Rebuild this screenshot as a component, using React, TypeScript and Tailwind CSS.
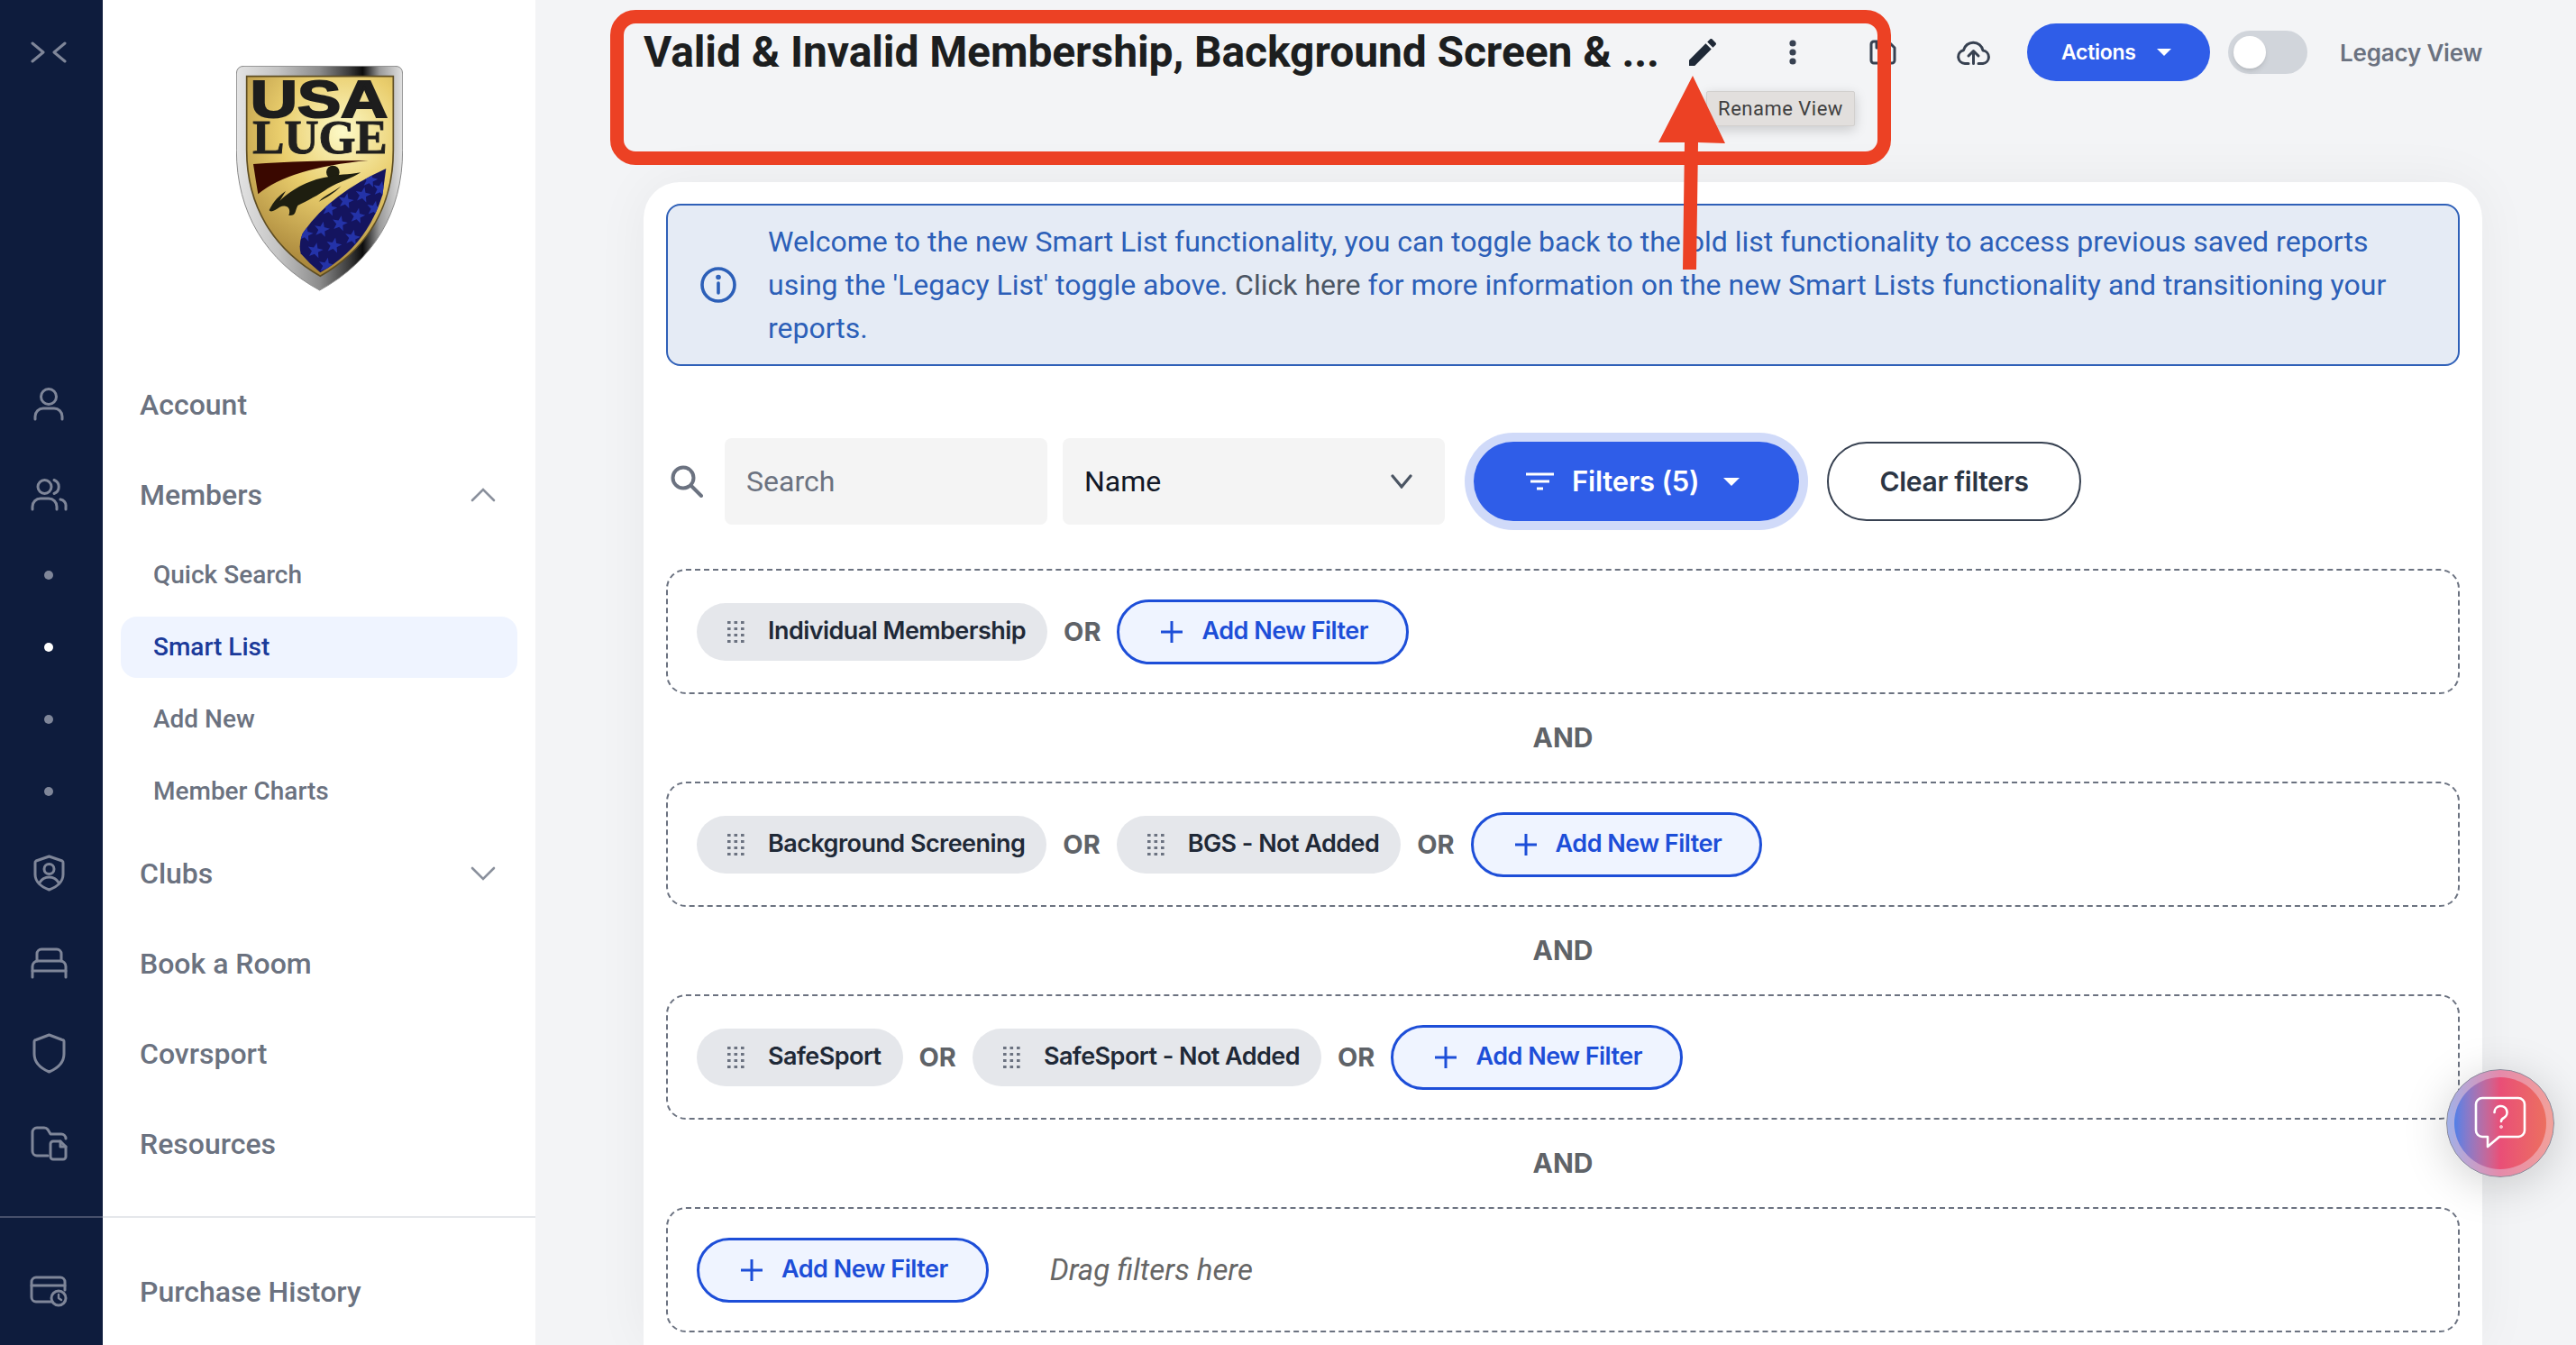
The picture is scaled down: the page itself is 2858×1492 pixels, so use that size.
import React from 'react';

const STARS = [
  [490, 520], [547, 500], [435, 545], [410, 615], [470, 595], [528, 570], [585, 545],
  [388, 685], [450, 668], [512, 642], [355, 630], [425, 735], [570, 450], [606, 480],
];

function starPoints(cx: number, cy: number, r: number) {
  const pts: string[] = [];
  for (let i = 0; i < 10; i++) {
    const rad = i % 2 === 0 ? r : r * 0.42;
    const a = -Math.PI / 2 + (i * Math.PI) / 5 + 0.2;
    pts.push(`${cx + rad * Math.cos(a)},${cy + rad * Math.sin(a)}`);
  }
  return pts.join(' ');
}

function Logo() {
  return (
    <svg viewBox="125 70 555 750" className="w-[185px] h-[250px]">
      <defs>
        <linearGradient id="bezel" x1="0" y1="0" x2="1" y2="0">
          <stop offset="0" stopColor="#e4e4e4" />
          <stop offset="0.25" stopColor="#c4c4c4" />
          <stop offset="0.5" stopColor="#8c8c8c" />
          <stop offset="0.68" stopColor="#3a3a3a" />
          <stop offset="0.76" stopColor="#0c0c0c" />
          <stop offset="0.86" stopColor="#9a9a9a" />
          <stop offset="1" stopColor="#e2e2e2" />
        </linearGradient>
        <radialGradient id="gold" gradientUnits="userSpaceOnUse" cx="480" cy="290" r="470">
          <stop offset="0" stopColor="#fdfac8" />
          <stop offset="0.45" stopColor="#e9cd6c" />
          <stop offset="1" stopColor="#a8853a" />
        </radialGradient>
        <clipPath id="flag">
          <path d="M624 412 Q430 500 345 630 Q332 665 340 695 Q370 730 405 758 Q560 670 612 500 Z" />
        </clipPath>
      </defs>
      <path
        d="M152 71 H653 Q679 71 679 97 V350 C679 560 580 720 403 817 C225 720 126 560 126 350 V97 Q126 71 152 71 Z"
        fill="url(#bezel)"
        stroke="#8a8a8a"
        strokeWidth="3"
      />
      <path
        d="M160 105 H648 V350 C648 540 560 680 405 770 C250 680 160 540 160 350 Z"
        fill="url(#gold)"
        stroke="#5e4d22"
        strokeWidth="5"
      />
      <text
        x="172"
        y="240"
        textLength="458"
        lengthAdjust="spacingAndGlyphs"
        fontFamily="Liberation Sans, sans-serif"
        fontWeight="700"
        fontSize="170"
        fill="#1d1d1d"
        stroke="#1d1d1d"
        strokeWidth="6"
      >
        USA
      </text>
      <text
        x="180"
        y="360"
        textLength="448"
        lengthAdjust="spacingAndGlyphs"
        fontFamily="Liberation Serif, serif"
        fontWeight="700"
        fontSize="160"
        fill="#1f1f1f"
        stroke="#1f1f1f"
        strokeWidth="3"
      >
        LUGE
      </text>
      <path d="M182 397 Q350 385 565 385 Q300 410 198 497 Q190 450 182 397 Z" fill="#3a0800" />
      <path d="M624 412 Q430 500 345 630 Q332 665 340 695 Q370 730 405 758 Q560 670 612 500 Z" fill="#14145f" />
      <g clipPath="url(#flag)" fill="#2433a8">
        {STARS.map(([x, y]) => (
          <polygon key={`${x}-${y}`} points={starPoints(x, y, 27)} />
        ))}
      </g>
      <circle cx="447" cy="424" r="22" fill="#1e1e10" />
      <path
        d="M235 550 C250 520 270 500 290 487 L270 520 C300 490 360 450 430 440 C460 432 500 432 540 425 C510 445 470 455 430 478 C400 500 360 520 330 535 C320 555 325 570 300 568 C310 540 290 530 270 540 C255 550 240 560 235 550 Z"
        fill="#1e1e10"
      />
      <path d="M400 522 C420 500 450 490 475 470 C450 495 425 510 400 522 Z" fill="#1e1e10" />
    </svg>
  );
}

const railStroke = {
  fill: 'none',
  stroke: '#7f8699',
  strokeWidth: 3,
  strokeLinecap: 'round' as const,
  strokeLinejoin: 'round' as const,
};

function Collapse() {
  return (
    <svg width="40" height="24" viewBox="0 0 40 24" {...railStroke}>
      <path d="M2 2 L14 12 L2 22" />
      <path d="M38 2 L26 12 L38 22" />
    </svg>
  );
}

function UserIcon() {
  return (
    <svg width="34" height="37" viewBox="0 0 34 37" {...railStroke}>
      <circle cx="17" cy="10" r="8.5" />
      <path d="M2 35 v-3 a9 9 0 0 1 9-9 h12 a9 9 0 0 1 9 9 v3" />
    </svg>
  );
}

function UsersIcon() {
  return (
    <svg width="41" height="37" viewBox="0 0 41 37" {...railStroke}>
      <circle cx="15.5" cy="10" r="7.5" />
      <path d="M26 2.5 a8 8 0 0 1 0 15" />
      <path d="M2 35 v-3 a9 9 0 0 1 9-9 h9 a9 9 0 0 1 9 9 v3" />
      <path d="M33 24 a7 7 0 0 1 6 8 v3" />
    </svg>
  );
}

function ShieldUserIcon() {
  return (
    <svg width="35" height="41" viewBox="0 0 35 41" {...railStroke}>
      <path d="M17.5 2 L32 7 a2 2 0 0 1 1 2 V22 C33 30 26 36 17.5 39 C9 36 2 30 2 22 V9 a2 2 0 0 1 1-2 Z" />
      <circle cx="17.5" cy="16" r="5.5" />
      <path d="M7 31 C10 26 14 25 17.5 25 C21 25 25 26 28 31" />
    </svg>
  );
}

function BedIcon() {
  return (
    <svg width="41" height="35" viewBox="0 0 41 35" {...railStroke}>
      <path d="M7 15 V7 a5 5 0 0 1 5-5 h17 a5 5 0 0 1 5 5 v8" />
      <path d="M2 33 V21 a6 6 0 0 1 6-6 h25 a6 6 0 0 1 6 6 v12" />
      <path d="M2 26 H39" />
    </svg>
  );
}

function ShieldIcon() {
  return (
    <svg width="37" height="45" viewBox="0 0 37 45" {...railStroke}>
      <path d="M18.5 2 L33 7.5 a2 2 0 0 1 2 2 V23 C35 32 28 39 18.5 43 C9 39 2 32 2 23 V9.5 a2 2 0 0 1 2-2 Z" />
    </svg>
  );
}

function FolderFileIcon() {
  return (
    <svg width="41" height="39" viewBox="0 0 41 39" {...railStroke}>
      <path d="M19 33 H7 a5 5 0 0 1-5-5 V7 a5 5 0 0 1 5-5 h8 a5 5 0 0 1 4 2 l3 5 h12 a5 5 0 0 1 5 5" />
      <path d="M22 20 a3 3 0 0 1 3-3 h8 l6 6 v11 a3 3 0 0 1-3 3 H25 a3 3 0 0 1-3-3 Z" />
      <path d="M33 17 v6 h6" />
    </svg>
  );
}

function CardClockIcon() {
  return (
    <svg width="42" height="35" viewBox="0 0 42 35" {...railStroke}>
      <path d="M24 29 H7 a5 5 0 0 1-5-5 V7 a5 5 0 0 1 5-5 h27 a5 5 0 0 1 5 5 v9" />
      <path d="M2 11 H39" />
      <circle cx="32" cy="25" r="8" />
      <path d="M32 21 v4 l3 2" strokeWidth="2.4" />
    </svg>
  );
}

function Chevron({ up, size = 28 }: { up?: boolean; size?: number }) {
  return (
    <svg width={size} height="16" viewBox="0 0 28 16" fill="none" stroke="#8a909c" strokeWidth="2.6" strokeLinecap="round">
      <path d={up ? 'M2 14 L14 2 L26 14' : 'M2 2 L14 14 L26 2'} />
    </svg>
  );
}

function Rail() {
  const Dot = ({ on }: { on?: boolean }) => (
    <div className="h-[80px] pr-[6px] flex items-center justify-center">
      <div className={on ? 'w-[10px] h-[10px] rounded-full bg-white' : 'w-[10px] h-[10px] rounded-full bg-[#7f8699]'} />
    </div>
  );
  const Row = ({ children }: { children: React.ReactNode }) => (
    <div className="h-[100px] pr-[6px] flex items-center justify-center">{children}</div>
  );
  return (
    <div className="w-[114px] shrink-0 h-full bg-[#0e1c3d] flex flex-col">
      <div className="h-[398px] shrink-0 flex justify-center pt-[46px] pr-[6px]">
        <div className="h-[24px]">
          <Collapse />
        </div>
      </div>
      <Row>
        <UserIcon />
      </Row>
      <Row>
        <UsersIcon />
      </Row>
      <Dot />
      <Dot on />
      <Dot />
      <Dot />
      <Row>
        <ShieldUserIcon />
      </Row>
      <Row>
        <BedIcon />
      </Row>
      <Row>
        <ShieldIcon />
      </Row>
      <Row>
        <FolderFileIcon />
      </Row>
      <div className="mt-[31px] h-[2px] bg-[#474f6b]" />
      <div className="mt-[31px]">
        <Row>
          <CardClockIcon />
        </Row>
      </div>
    </div>
  );
}

function NavTop({ label, chevron }: { label: string; chevron?: 'up' | 'down' }) {
  return (
    <div className="h-[100px] pt-[2px] pl-[41px] pr-[44px] flex items-center justify-between text-[32px] font-medium text-[#6b7280]">
      <span>{label}</span>
      {chevron && <Chevron up={chevron === 'up'} />}
    </div>
  );
}

function NavSub({ label, active }: { label: string; active?: boolean }) {
  return (
    <div className="h-[80px] flex items-center pl-[20px] pr-[20px]">
      <div
        className={
          active
            ? 'w-full h-[68px] rounded-[18px] bg-[#eff4ff] pl-[36px] flex items-center text-[28px] font-medium text-[#1b3a9a]'
            : 'w-full h-[68px] pl-[36px] flex items-center text-[28px] font-medium text-[#6b7280]'
        }
      >
        {label}
      </div>
    </div>
  );
}

function Sidebar() {
  return (
    <div className="w-[480px] shrink-0 h-full bg-white flex flex-col">
      <div className="h-[398px] shrink-0 flex justify-center pt-[73px]">
        <div className="h-[250px]">
          <Logo />
        </div>
      </div>
      <NavTop label="Account" />
      <NavTop label="Members" chevron="up" />
      <NavSub label="Quick Search" />
      <NavSub label="Smart List" active />
      <NavSub label="Add New" />
      <NavSub label="Member Charts" />
      <NavTop label="Clubs" chevron="down" />
      <NavTop label="Book a Room" />
      <NavTop label="Covrsport" />
      <NavTop label="Resources" />
      <div className="mt-[31px] h-[2px] bg-[#e5e7eb]" />
      <div className="mt-[31px]">
        <NavTop label="Purchase History" />
      </div>
    </div>
  );
}

function Grip() {
  return (
    <svg width="19" height="24" viewBox="0 0 19 24" fill="#6b7280" className="shrink-0">
      {[0, 7.5, 15].map((x) =>
        [0, 7, 14, 21].map((y) => <rect key={`${x}-${y}`} x={x} y={y} width="3.6" height="3" />),
      )}
    </svg>
  );
}

function Pill({ label }: { label: string }) {
  return (
    <div className="h-[64px] pl-[34px] pr-[24px] rounded-full bg-[#e5e7eb] flex items-center gap-[26px] shrink-0">
      <Grip />
      <span className="text-[27px] tracking-[-0.55px] font-semibold text-[#1f2937] whitespace-nowrap">{label}</span>
    </div>
  );
}

function Or() {
  return <span className="text-[29px] font-bold text-[#5f6368]">OR</span>;
}

function AddFilter() {
  return (
    <div className="h-[72px] pl-[46px] pr-[42px] rounded-full border-[3px] border-[#1d4ed8] bg-[#eff4ff] flex items-center gap-[21px] shrink-0">
      <svg width="24" height="24" viewBox="0 0 24 24" stroke="#1d4ed8" strokeWidth="3" className="shrink-0">
        <path d="M12 0 V24 M0 12 H24" />
      </svg>
      <span className="text-[27px] tracking-[-0.5px] font-semibold text-[#1d4ed8] whitespace-nowrap">Add New Filter</span>
    </div>
  );
}

function Group({ children }: { children: React.ReactNode }) {
  return (
    <div className="h-[139px] px-[32px] rounded-[22px] border-2 border-dashed border-[#6b7280] flex items-center gap-[18px]">
      {children}
    </div>
  );
}

function And() {
  return (
    <div className="h-[97px] flex items-center justify-center text-[30px] font-bold text-[#5f6368]">AND</div>
  );
}

function Header() {
  return (
    <div className="h-[202px] pt-[26px] shrink-0">
      <div className="h-[64px] flex items-center">
        <div className="w-[1155px] shrink-0 text-[48px] tracking-[-0.1px] font-bold text-[#1c1e1f] font-['Roboto',sans-serif] whitespace-nowrap">
          Valid &amp; Invalid Membership, Background Screen &amp; ...
        </div>
        <svg width="40" height="40" viewBox="0 0 24 24" fill="#1f2937" className="shrink-0">
          <path d="M3 17.25V21h3.75L17.81 9.94l-3.75-3.75L3 17.25zM20.71 7.04c.39-.39.39-1.02 0-1.41l-2.34-2.34c-.39-.39-1.02-.39-1.41 0l-1.83 1.83 3.75 3.75 1.83-1.83z" />
        </svg>
        <svg width="8" height="28" viewBox="0 0 8 28" fill="#374151" className="ml-[76px] shrink-0">
          <circle cx="4" cy="4" r="3.6" />
          <circle cx="4" cy="14" r="3.6" />
          <circle cx="4" cy="24" r="3.6" />
        </svg>
        <svg width="30" height="28" viewBox="0 0 30 28" fill="none" stroke="#374151" strokeWidth="3" strokeLinejoin="round" className="ml-[81px] shrink-0">
          <path d="M2 5 a3 3 0 0 1 3-3 h16 l7 7 v14 a3 3 0 0 1-3 3 H5 a3 3 0 0 1-3-3 Z" />
          <path d="M8 2 v7 h9 V2" />
        </svg>
        <svg width="37" height="27" viewBox="0 0 37 27" fill="none" stroke="#374151" strokeWidth="3" strokeLinecap="round" strokeLinejoin="round" className="ml-[67px] shrink-0">
          <path d="M13 25.500 H9 a7.500 7.500 0 0 1-1.500-14.800 A11 11 0 0 1 29 11 a7.300 7.300 0 0 1 0 14.500 H24" />
          <path d="M18.500 25.500 V12 M13 17 l5.500-5.500 5.500 5.500" />
        </svg>
        <div className="ml-[41px] w-[203px] h-[64px] rounded-full bg-[#2f5de8] flex items-center pl-[38px] gap-[23px] shrink-0">
          <span className="text-[23px] tracking-[-0.3px] font-semibold text-white">Actions</span>
          <div className="w-0 h-0 border-x-[8px] border-x-transparent border-t-[8px] border-t-white" />
        </div>
        <div className="ml-[20px] w-[88px] h-[48px] rounded-full bg-[#d1d5db] flex items-center pl-[6px] shrink-0">
          <div className="w-[36px] h-[36px] rounded-full bg-white shadow-md" />
        </div>
        <span className="ml-[36px] text-[26px] tracking-[-0.2px] font-semibold text-[#6b7280] whitespace-nowrap">Legacy View</span>
      </div>
    </div>
  );
}

function Alert() {
  return (
    <div className="h-[180px] rounded-[16px] border-2 border-[#2f60b8] bg-[#e5ebf5] flex items-center pl-[36px] pr-[40px] gap-[35px] font-['Roboto',sans-serif]">
      <svg width="40" height="40" viewBox="0 0 40 40" fill="none" stroke="#2c5fb8" strokeWidth="3.6" strokeLinecap="round" className="shrink-0">
        <circle cx="20" cy="20" r="18" />
        <path d="M20 18 V29" />
        <circle cx="20" cy="11.500" r="1" fill="#2c5fb8" />
      </svg>
      <p className="text-[32px] leading-[48px] text-[#2c5fb8]">
        Welcome to the new Smart List functionality, you can toggle back to the old list functionality to access previous saved reports using the 'Legacy List' toggle above. <span className="text-[#4b5563]">Click here</span> for more information on the new Smart Lists functionality and transitioning your reports.
      </p>
    </div>
  );
}

function Toolbar() {
  return (
    <div className="mt-[80px] mb-[49px] h-[96px] flex items-center pl-[4px]">
      <svg width="38" height="36" viewBox="0 0 38 36" fill="none" stroke="#6b7280" strokeWidth="4" strokeLinecap="round" className="shrink-0">
        <circle cx="15" cy="14" r="11.500" />
        <path d="M24 23 L35 34" />
      </svg>
      <div className="ml-[23px] w-[358px] h-[96px] rounded-[8px] bg-[#f4f4f4] flex items-center pl-[24px] text-[32px] text-[#6b7280] font-['Roboto',sans-serif] shrink-0">
        Search
      </div>
      <div className="ml-[17px] w-[424px] h-[96px] rounded-[8px] bg-[#f4f4f4] flex items-center justify-between pl-[24px] pr-[36px] text-[32px] text-[#111827] font-['Roboto',sans-serif] shrink-0">
        <span>Name</span>
        <svg width="24" height="16" viewBox="0 0 24 16" fill="none" stroke="#4b5563" strokeWidth="3.200" strokeLinecap="round">
          <path d="M2 2 L12 14 L22 2" />
        </svg>
      </div>
      <div className="ml-[32px] w-[361px] h-[88px] rounded-full bg-[#2f5de8] ring-[10px] ring-[#d0daf9] flex items-center pl-[58px] shrink-0">
        <svg width="31" height="20" viewBox="0 0 31 20" stroke="#fff" strokeWidth="3" className="shrink-0">
          <path d="M0 2 H31 M5 10 H26 M12 18 H19" />
        </svg>
        <span className="ml-[20px] text-[31px] tracking-[-0.2px] font-semibold text-white whitespace-nowrap">Filters (5)</span>
        <div className="ml-[27px] w-0 h-0 border-x-[9px] border-x-transparent border-t-[9px] border-t-white" />
      </div>
      <div className="ml-[31px] w-[282px] h-[88px] rounded-full border-2 border-[#374151] bg-white flex items-center justify-center text-[30px] tracking-[-0.3px] font-semibold text-[#2b3544] shrink-0">
        Clear filters
      </div>
    </div>
  );
}

function Overlays() {
  return (
    <>
      <div className="absolute left-[1893px] top-[101px] w-[165px] h-[39px] rounded-[2px] bg-[#e2dfdd] border border-[#d2d0ce] shadow-[0_4px_14px_rgba(0,0,0,0.18)] flex items-center justify-center text-[22px] tracking-[0.5px] text-[#404040] font-['Roboto',sans-serif]">
        Rename View
      </div>
      <div className="absolute left-[677px] top-[11px] w-[1421px] h-[172px] rounded-[28px] border-[15px] border-[#ec4124]" />
      <svg className="absolute left-[1830px] top-[80px]" width="100" height="225" viewBox="1830 80 100 225" fill="#ec4124">
        <polygon points="1878,84 1914,159 1884,158 1882,299 1867,299 1869,158 1840,158" />
      </svg>
      <div className="absolute left-[2714px] top-[1186px] w-[120px] h-[120px] rounded-full p-[8px] bg-linear-to-r from-[#9fb0e8] via-[#e58aaa] to-[#f2a19a] border border-[#8a8a9a] shadow-[0_8px_50px_rgba(0,0,0,0.18)]">
        <div className="w-full h-full rounded-full bg-linear-to-r from-[#4f7fe8] via-[#e94e77] to-[#ec6f5f] flex items-center justify-center">
          <svg width="58" height="60" viewBox="0 0 58 60" fill="none" stroke="#fff" strokeWidth="2.6" strokeLinecap="round" strokeLinejoin="round">
            <path d="M9 2 H49 a7 7 0 0 1 7 7 V38 a7 7 0 0 1-7 7 H28 L15 56 V45 H9 a7 7 0 0 1-7-7 V9 a7 7 0 0 1 7-7 Z" />
            <path d="M22.500 18 a7 7 0 1 1 10.500 6 c-2 1-3 2-3 4" />
            <circle cx="30" cy="34" r="0.5" fill="#fff" />
          </svg>
        </div>
      </div>
    </>
  );
}

export default function App() {
  return (
    <div className="relative w-[2858px] h-[1492px] overflow-hidden flex bg-[#f3f4f6] font-['Inter',sans-serif]">
      <div className="font-['Roboto',sans-serif] flex shrink-0 h-full">
        <Rail />
        <Sidebar />
      </div>
      <div className="flex-1 min-w-0 h-full pl-[120px] pr-[104px] flex flex-col">
        <Header />
        <div className="flex-1 rounded-t-[40px] bg-white shadow-[0_0_60px_rgba(0,0,0,0.05)] px-[25px] pt-[24px]">
          <Alert />
          <Toolbar />
          <Group>
            <Pill label="Individual Membership" />
            <Or />
            <AddFilter />
          </Group>
          <And />
          <Group>
            <Pill label="Background Screening" />
            <Or />
            <Pill label="BGS - Not Added" />
            <Or />
            <AddFilter />
          </Group>
          <And />
          <Group>
            <Pill label="SafeSport" />
            <Or />
            <Pill label="SafeSport - Not Added" />
            <Or />
            <AddFilter />
          </Group>
          <And />
          <Group>
            <AddFilter />
            <span className="ml-[50px] text-[33px] italic text-[#666666] font-['Roboto',sans-serif]">Drag filters here</span>
          </Group>
        </div>
      </div>
      <Overlays />
    </div>
  );
}
